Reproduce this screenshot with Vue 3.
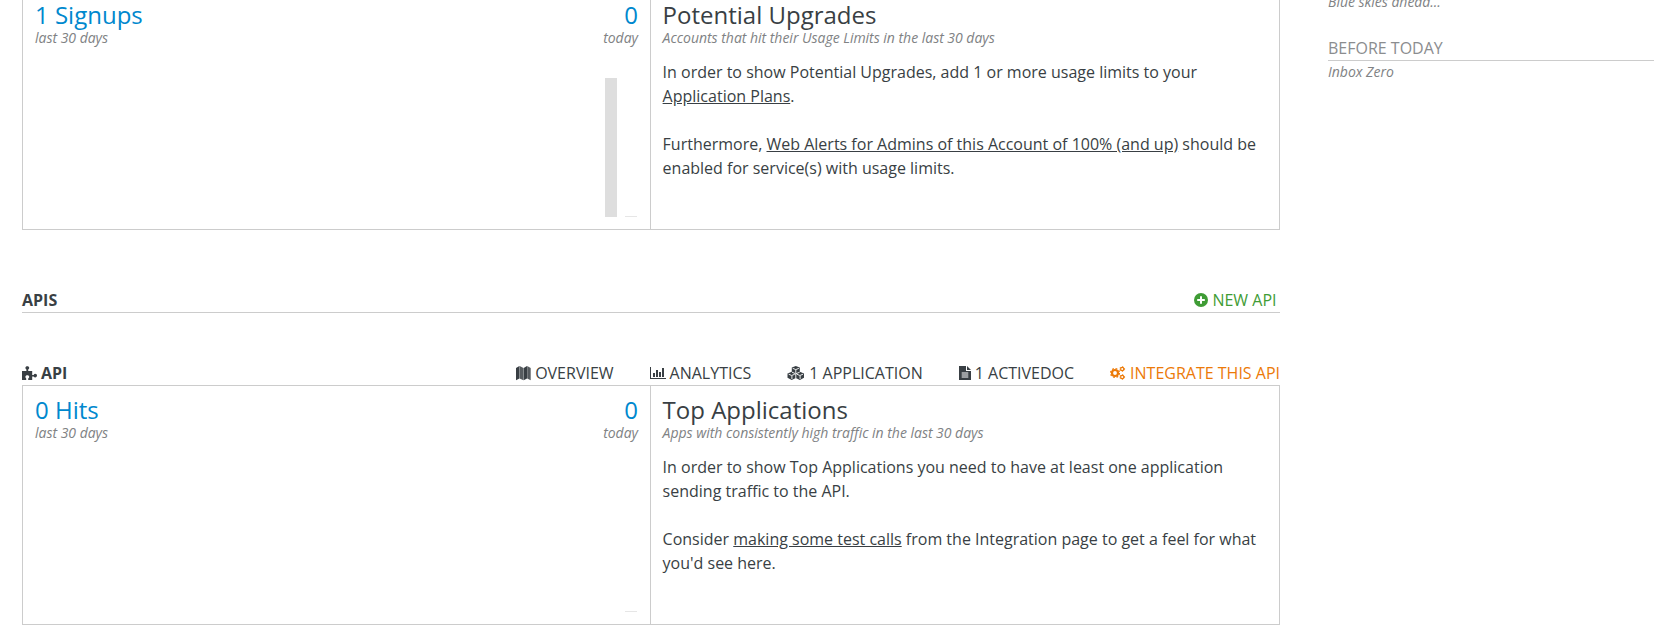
<script setup>
const charts = {
  signups: [{ x: 582, h: 139 }, { x: 602, h: 1 }],
  hits: [{ x: 602, h: 1 }],
}
const nav = [
  { label: 'OVERVIEW', icon: 'map', w: 15 },
  { label: 'ANALYTICS', icon: 'bars', w: 16 },
  { label: '1 APPLICATION', icon: 'cubes', w: 18 },
  { label: '1 ACTIVEDOC', icon: 'file', w: 12 },
  { label: 'INTEGRATE THIS API', icon: 'gears', w: 16 },
]
</script>

<template>
  <div class="page">
    <main class="main">
      <section class="panel">
        <div class="stats">
          <div class="row">
            <div><h2 class="blue">1 Signups</h2><p class="sub">last 30 days</p></div>
            <div class="right"><h2 class="blue">0</h2><p class="sub">today</p></div>
          </div>
          <svg class="chart" width="627" height="140">
            <rect v-for="b in charts.signups" :key="b.x" :x="b.x" :y="139 - b.h" width="12" :height="b.h" :class="{ faint: b.h === 1 }" />
          </svg>
        </div>
        <div class="info">
          <h2>Potential Upgrades</h2>
          <p class="sub">Accounts that hit their Usage Limits in the last 30 days</p>
          <p class="text">In order to show Potential Upgrades, add 1 or more usage limits to your <a>Application Plans</a>.</p>
          <p class="text">Furthermore, <a>Web Alerts for Admins of this Account of 100% (and up)</a> should be enabled for service(s) with usage limits.</p>
        </div>
      </section>

      <header class="apis">
        <h3>APIS</h3>
        <a class="new">
          <svg width="14" height="14" viewBox="0 0 14 14"><circle cx="7" cy="7" r="7" /><path d="M7 3.2v7.6M3.2 7h7.6" stroke="#fff" stroke-width="2" /></svg>
          <span>NEW API</span>
        </a>
      </header>

      <header class="apihead">
        <h3>
          <svg width="15" height="15" viewBox="0 0 15 15"><path d="M0 5H4.4V3.6C3.6 3 3.4 2.4 3.4 1.8C3.4.8 4.2.2 5.3.2S7.2.8 7.2 1.8C7.2 2.4 7 3 6.2 3.6V5H10.2V9H11.6C12 8.2 12.6 7.8 13.2 7.8C14.3 7.8 15 8.6 15 9.6S14.3 11.4 13.2 11.4C12.6 11.4 12 11 11.6 10.4H10.2V14H6.2V12.6C7 12 7.2 11.4 7.2 10.8C7.2 9.8 6.4 9.2 5.3 9.2S3.4 9.8 3.4 10.8C3.4 11.4 3.6 12 4.2 12.6V14H0Z" /></svg>
          <span>API</span>
        </h3>
        <nav>
          <a v-for="n in nav" :key="n.label" :class="n.icon">
            <svg :width="n.w" height="16" :viewBox="`0 0 ${n.w} 16`">
              <template v-if="n.icon === 'map'">
                <path d="M0 3 3.4 1V13.4L0 15.2ZM7.7 3 11 1V13.4L7.7 15.2Z" />
                <path d="M3.6 1 7.5 3V15.2L3.6 13.4ZM11.2 1 14.7 3V15.2L11.2 13.4Z" opacity=".85" />
              </template>
              <path v-else-if="n.icon === 'bars'" d="M0 2H1V13H16V14H0ZM3 8H5V12H3ZM6 5H8V12H6ZM9 7H11V12H9ZM12 3H14V12H12Z" />
              <template v-else-if="n.icon === 'cubes'">
                <path d="M8.8 1 12.8 2.6V6.7L17 8.5V12.7L12.9 15 8.8 13 4.7 15 .5 12.7V8.5L4.8 6.7V2.6Z" />
                <path d="M5.7 3.3 8.8 4.6 11.9 3.3M8.8 4.8V8M1.7 9.2 4.7 10.5 7.8 9.2M4.9 10.8V14M9.8 9.2 12.9 10.5 16 9.2M13.1 10.8V14M5 7.2 8.8 8.8 12.7 7.2M8.8 8.8V13" fill="none" stroke="#fff" stroke-width=".9" />
              </template>
              <template v-else-if="n.icon === 'file'">
                <path d="M0 1H7V6H12V15H0ZM8 1 12 5H8Z" />
                <path d="M2.7 8H9.3M2.7 10H9.3M2.7 12H9.3" stroke="#fff" stroke-width="1" />
              </template>
              <template v-else>
                <circle cx="5" cy="8" r="3" fill="none" stroke="currentColor" stroke-width="2.2" />
                <circle cx="5" cy="8" r="4.5" fill="none" stroke="currentColor" stroke-width="1.2" stroke-dasharray="1.8 1.734" />
                <g fill="none" stroke="currentColor">
                  <circle cx="12.2" cy="4" r="1.6" stroke-width="1.2" />
                  <circle cx="12.2" cy="4" r="2.4" stroke-width=".9" stroke-dasharray="1.2 1.313" />
                  <circle cx="12.2" cy="12" r="1.6" stroke-width="1.2" />
                  <circle cx="12.2" cy="12" r="2.4" stroke-width=".9" stroke-dasharray="1.2 1.313" />
                </g>
              </template>
            </svg>
            <span>{{ n.label }}</span>
          </a>
        </nav>
      </header>
      <section class="panel">
        <div class="stats">
          <div class="row">
            <div><h2 class="blue">0 Hits</h2><p class="sub">last 30 days</p></div>
            <div class="right"><h2 class="blue">0</h2><p class="sub">today</p></div>
          </div>
          <svg class="chart" width="627" height="140">
            <rect v-for="b in charts.hits" :key="b.x" :x="b.x" :y="139 - b.h" width="12" :height="b.h" class="faint" />
          </svg>
        </div>
        <div class="info">
          <h2>Top Applications</h2>
          <p class="sub">Apps with consistently high traffic in the last 30 days</p>
          <p class="text">In order to show Top Applications you need to have at least one application sending traffic to the API.</p>
          <p class="text">Consider <a>making some test calls</a> from the Integration page to get a feel for what you'd see here.</p>
        </div>
      </section>
    </main>

    <aside class="side">
      <p class="sub">Blue skies ahead...</p>
      <h4>BEFORE TODAY</h4>
      <p class="sub">Inbox Zero</p>
    </aside>
  </div>
</template>

<style>
body { margin: 0; background: #fff; overflow: hidden; }
</style>

<style scoped>
.page { display: flex; height: 630px; overflow: hidden; font: 16px/24px "Open Sans", sans-serif; color: #393f44; }
h2, h3, h4, p { margin: 0; font-weight: 400; }
svg { fill: currentColor; flex: none; }
.main { width: 1258px; margin: -10px 48px 0 22px; flex: none; }
.panel { display: flex; box-sizing: border-box; height: 240px; border: 1px solid #ccc; }
.stats { width: 627px; flex: none; border-right: 1px solid #ccc; }
.row { display: flex; justify-content: space-between; padding: 12px 12px 0; height: 75px; box-sizing: border-box; }
.right { text-align: right; }
.chart { display: block; margin-top: 12px; fill: #dedede; }
.faint { fill: #e6e6e6; }
.info { padding: 12px 12px 12px 11.6px; flex: 1; }
h2 { font-size: 24px; line-height: 24px; }
.blue { color: #0088ce; }
.sub { font-size: 14px; line-height: 21px; font-style: italic; color: #808284; letter-spacing: -0.02px; font-variant-ligatures: common-ligatures; }
.text { margin-top: 12px; }
.text + .text { margin-top: 24px; }
.text a { text-decoration: underline; }
h3 { font-size: 16px; font-weight: 700; display: flex; align-items: center; gap: 4px; }
.apis { margin-top: 58px; display: flex; justify-content: space-between; height: 24px; border-bottom: 1px solid #ccc; }
.new { display: flex; align-items: center; gap: 4px; color: #3f9c35; margin-right: 3.5px; }
.apihead { margin-top: 48px; height: 24px; display: flex; justify-content: space-between; }
nav { display: flex; gap: 36px; }
nav a { display: flex; align-items: center; gap: 4px; }
.gears { color: #ec7a08; }
.side { width: 326px; margin-top: -9px; }
h4 { margin-top: 24px; height: 24px; font-size: 16px; line-height: 24px; color: #8b8d8f; border-bottom: 1px solid #ccc; }
</style>
